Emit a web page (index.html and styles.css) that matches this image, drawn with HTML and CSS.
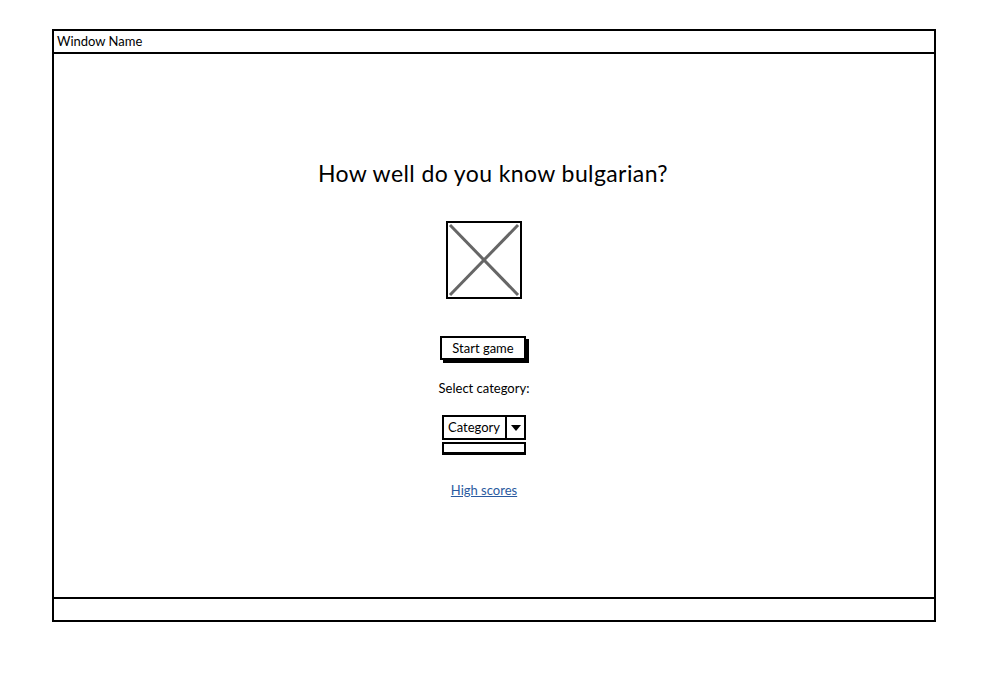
FILE: index.html
```html
<!DOCTYPE html>
<html>
<head>
<meta charset="utf-8">
<link rel="stylesheet" href="styles.css">
</head>
<body>
<div class="window">
  <div class="titlebar">Window Name</div>
  <div class="content">
    <h1 class="heading">How well do you know bulgarian?</h1>
    <div class="image">
      <svg width="76" height="78" viewBox="0 0 76 78">
        <rect x="1" y="1" width="74" height="76" fill="#fff" stroke="#000" stroke-width="2"/>
        <line x1="4" y1="4" x2="72" y2="74" stroke="#666" stroke-width="3"/>
        <line x1="72" y1="4" x2="4" y2="74" stroke="#666" stroke-width="3"/>
      </svg>
    </div>
    <div class="button">Start game</div>
    <div class="label">Select category:</div>
    <div class="dropdown">
      <div class="select">
        <span class="select-text">Category</span>
        <span class="select-arrow"><svg width="10" height="6" viewBox="0 0 10 6"><path d="M0 0 L10 0 L5 6 Z" fill="#000"/></svg></span>
      </div>
      <div class="list"></div>
    </div>
    <a class="link" href="#">High scores</a>
  </div>
  <div class="footer"></div>
</div>
</body>
</html>
```
FILE: styles.css
```css
html, body {
  margin: 0;
  padding: 0;
  background: #fff;
}
body {
  font-family: "Lato", "Open Sans", sans-serif;
  color: #000;
  padding: 29px 0 0 52px;
}
.window {
  width: 880px;
  height: 589px;
  border: 2px solid #000;
  display: flex;
  flex-direction: column;
}
.titlebar {
  height: 21px;
  border-bottom: 2px solid #000;
  font-size: 13px;
  line-height: 21px;
  padding-left: 3px;
}
.content {
  flex: 1;
  display: flex;
  flex-direction: column;
  align-items: center;
  padding-right: 20px;
}
.heading {
  margin: 105px 0 0 18px;
  font-size: 23px;
  font-weight: 400;
  line-height: 28px;
  letter-spacing: 0.4px;
}
.image {
  margin-top: 34px;
  height: 78px;
}
.image svg {
  display: block;
}
.button {
  margin-top: 37px;
  width: 82px;
  height: 20px;
  border: 2px solid #000;
  box-shadow: 3px 3px 0 #000;
  font-size: 13px;
  line-height: 20px;
  text-align: center;
  margin-left: -2px;
}
.label {
  margin-top: 20px;
  font-size: 13px;
  line-height: 16px;
}
.dropdown {
  margin-top: 19px;
  width: 84px;
}
.select {
  display: flex;
  height: 21px;
  border: 2px solid #000;
  font-size: 13px;
  line-height: 21px;
}
.select-text {
  flex: 1;
  padding-left: 4px;
  border-right: 2px solid #000;
}
.select-arrow {
  width: 17px;
  display: flex;
  align-items: center;
  justify-content: center;
}
.select-arrow svg {
  display: block;
}
.list {
  margin-top: 2px;
  height: 8px;
  border: 2px solid #000;
  border-bottom-width: 3px;
}
.link {
  margin-top: 27px;
  font-size: 13px;
  color: #2a5aa0;
  text-decoration: underline;
}
.footer {
  height: 21px;
  border-top: 2px solid #000;
}
```
